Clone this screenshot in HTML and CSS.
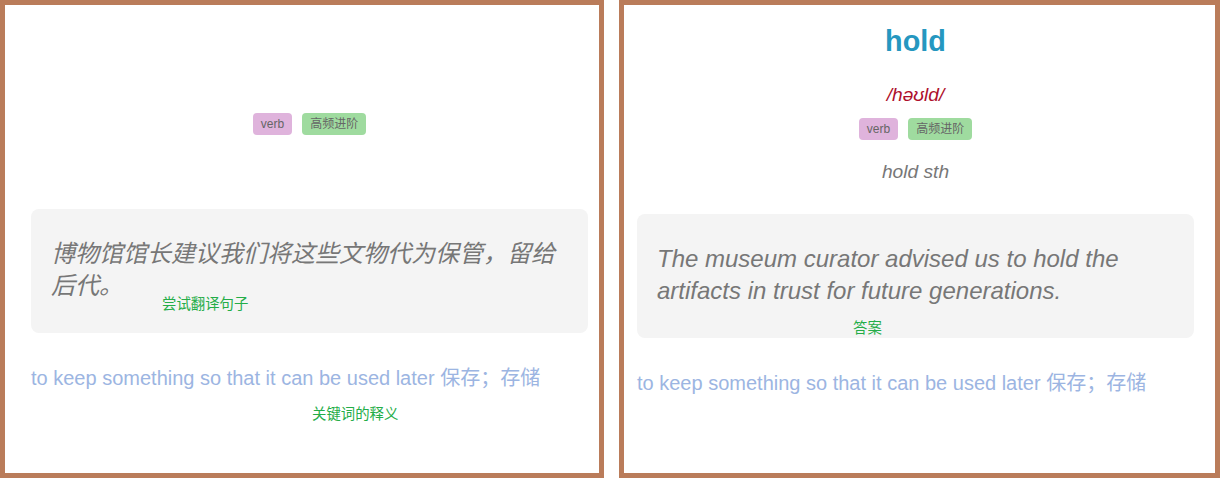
FILE: index.html
```html
<!DOCTYPE html>
<html lang="zh">
<head>
<meta charset="utf-8">
<title>Flashcard</title>
<link rel="stylesheet" href="styles.css">
</head>
<body>
<div class="board">
  <section class="card card--front">
    <div class="col">
      <div class="word"></div>
      <div class="phon"></div>
      <div class="tags"><span class="tag tag--pos">verb</span><span class="tag tag--lvl">高频进阶</span></div>
      <div class="usage"></div>
      <div class="sentence"><p class="sentence-text">博物馆馆长建议我们将这些文物代为保管，留给后代。</p></div>
      <p class="def">to keep something so that it can be used later 保存；存储</p>
    </div>
    <span class="note note--try">尝试翻译句子</span>
    <span class="note note--key">关键词的释义</span>
  </section>
  <section class="card card--back">
    <div class="col">
      <div class="word">hold</div>
      <div class="phon">/həʊld/</div>
      <div class="tags"><span class="tag tag--pos">verb</span><span class="tag tag--lvl">高频进阶</span></div>
      <div class="usage">hold sth</div>
      <div class="sentence"><p class="sentence-text">The museum curator advised us to hold the artifacts in trust for future generations.</p></div>
      <p class="def">to keep something so that it can be used later 保存；存储</p>
    </div>
    <span class="note note--answer">答案</span>
  </section>
</div>
</body>
</html>
```
FILE: styles.css
```css
* { box-sizing: border-box; }
html, body { margin: 0; padding: 0; background: #fff; }
body {
  font-family: "Liberation Sans", Arial, "Noto Sans CJK SC", sans-serif;
  width: 1224px;
  height: 479px;
  overflow: hidden;
}
.board {
  display: flex;
  gap: 15px;
}
.card {
  position: relative;
  height: 478px;
  border: 5px solid #ba7c5a;
  background: #fff;
}
.card--front { width: 604px; padding: 14px 0 0 26px; }
.card--back { width: 601px; padding: 19px 0 0 13px; }
.col {
  width: 557px;
  display: flex;
  flex-direction: column;
  align-items: stretch;
}
.word {
  height: 34px;
  line-height: 34px;
  font-size: 28.8px;
  font-weight: bold;
  color: #2597c0;
  text-align: center;
}
.phon {
  margin-top: 25px;
  height: 24px;
  line-height: 24px;
  font-size: 19.2px;
  font-style: italic;
  color: #ae0f2c;
  text-align: center;
}
.tags {
  margin-top: 11px;
  display: flex;
  justify-content: center;
  gap: 10px;
}
.tag {
  height: 22px;
  line-height: 22px;
  padding: 0 8px;
  border-radius: 4px;
  font-size: 12px;
  color: #666;
}
.tag--pos { background: #dfb3dc; }
.tag--lvl { background: #9fdb9f; }
.usage {
  margin-top: 20px;
  height: 24px;
  line-height: 24px;
  font-size: 19.2px;
  font-style: italic;
  color: #777;
  text-align: center;
}
.sentence {
  margin-top: 30px;
  background: #f4f4f4;
  border-radius: 8px;
  padding: 29px 20px 31px 20px;
}
.sentence-text {
  margin: 0;
  display: inline;
  font-size: 24px;
  line-height: 32px;
  font-style: italic;
  color: #777;
}
.def {
  margin: 33px 0 0 0;
  font-size: 20px;
  line-height: 24px;
  color: #9cb5e2;
}
.note {
  position: absolute;
  font-size: 14.4px;
  line-height: 16px;
  color: #24ad48;
  font-family: "Noto Sans CJK SC", sans-serif;
}
.note--try { left: 157px; top: 290px; }
.note--key { left: 307px; top: 400px; }
.note--answer { left: 229px; top: 314px; }
```
